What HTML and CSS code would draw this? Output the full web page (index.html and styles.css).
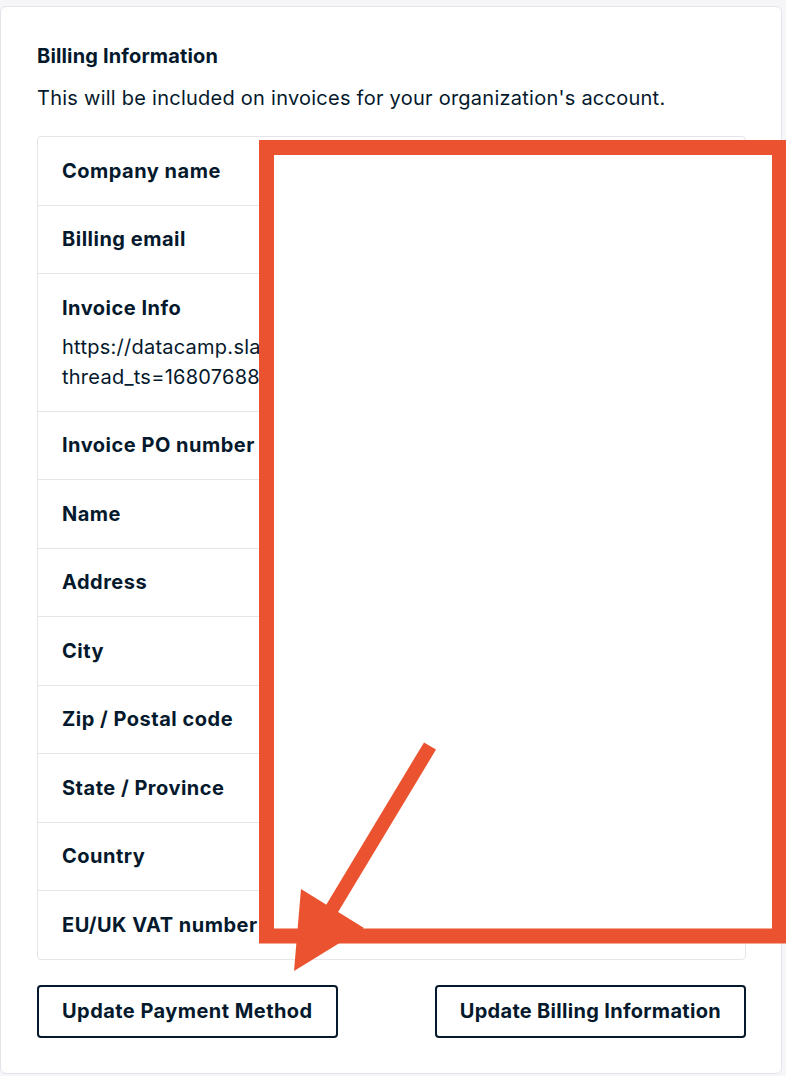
FILE: index.html
```html
<!DOCTYPE html>
<html lang="en">
<head>
<meta charset="utf-8">
<title>Billing Information</title>
<link rel="stylesheet" href="styles.css">
</head>
<body>
<div class="page">
  <section class="card">
    <h2 class="title">Billing Information</h2>
    <p class="desc">This will be included on invoices for your organization's account.</p>
    <div class="table">
      <div class="row"><span class="label">Company name</span></div>
      <div class="row"><span class="label">Billing email</span></div>
      <div class="row">
        <span class="label">Invoice Info</span>
        <span class="value">https://datacamp.slack.com/archives/C04AB12CD/p1680768812?<br>thread_ts=1680768812.345678&amp;cid=C04AB12CD</span>
      </div>
      <div class="row"><span class="label">Invoice PO number</span></div>
      <div class="row"><span class="label">Name</span></div>
      <div class="row"><span class="label">Address</span></div>
      <div class="row"><span class="label">City</span></div>
      <div class="row"><span class="label">Zip / Postal code</span></div>
      <div class="row"><span class="label">State / Province</span></div>
      <div class="row"><span class="label">Country</span></div>
      <div class="row"><span class="label">EU/UK VAT number</span></div>
    </div>
    <div class="actions">
      <button class="btn">Update Payment Method</button>
      <button class="btn">Update Billing Information</button>
    </div>
  </section>
</div>
<svg class="annotation" width="786" height="1076" viewBox="0 0 786 1076" aria-hidden="true">
  <rect x="266.5" y="147.5" width="513" height="788.5" fill="#ffffff" stroke="#eb5330" stroke-width="15"/>
  <line x1="430" y1="746" x2="330" y2="912" stroke="#eb5330" stroke-width="14"/>
  <polygon points="294,971 301,889 364,928" fill="#eb5330"/>
</svg>
</body>
</html>
```

FILE: styles.css
```css
* { box-sizing: border-box; }
html, body {
  margin: 0;
  padding: 0;
  background: #f6f6f9;
}
body {
  position: relative;
  width: 786px;
  height: 1076px;
  overflow: hidden;
  font-family: "Inter", "Liberation Sans", sans-serif;
  color: #05192d;
}
.page {
  padding-top: 6px;
}
.card {
  width: 782px;
  height: 1068px;
  background: #ffffff;
  border: 1px solid #e3e3ea;
  border-radius: 6px;
  padding: 35px 35px 35px 36px;
  display: flex;
  flex-direction: column;
}
.title {
  margin: 0;
  font-size: 20px;
  line-height: 28px;
  font-weight: 700;
  letter-spacing: 0.15px;
}
.desc {
  margin: 13px 0 0;
  font-size: 20px;
  line-height: 30px;
  font-weight: 400;
  letter-spacing: 0.25px;
}
.table {
  margin-top: 23px;
  border: 1px solid #e6e6ea;
  border-radius: 4px;
  display: flex;
  flex-direction: column;
}
.row {
  padding: 18.75px 24px;
  border-bottom: 1px solid #e6e6ea;
  display: flex;
  flex-direction: column;
  gap: 9px;
  font-size: 20px;
  line-height: 30px;
}
.row:last-child { border-bottom: none; }
.label { font-weight: 700; white-space: nowrap; letter-spacing: 0.5px; }
.value { font-weight: 400; letter-spacing: 0.25px; overflow-wrap: anywhere; }
.actions {
  margin-top: 25px;
  display: flex;
  justify-content: space-between;
}
.btn {
  font-family: inherit;
  font-size: 20px;
  line-height: 27px;
  font-weight: 700;
  letter-spacing: 0.45px;
  color: #05192d;
  background: #ffffff;
  border: 2px solid #05192d;
  border-radius: 4px;
  padding: 11px 23px;
}
.btn + .btn {
  letter-spacing: 0.3px;
}
.annotation {
  position: absolute;
  left: 0;
  top: 0;
  pointer-events: none;
}
```
